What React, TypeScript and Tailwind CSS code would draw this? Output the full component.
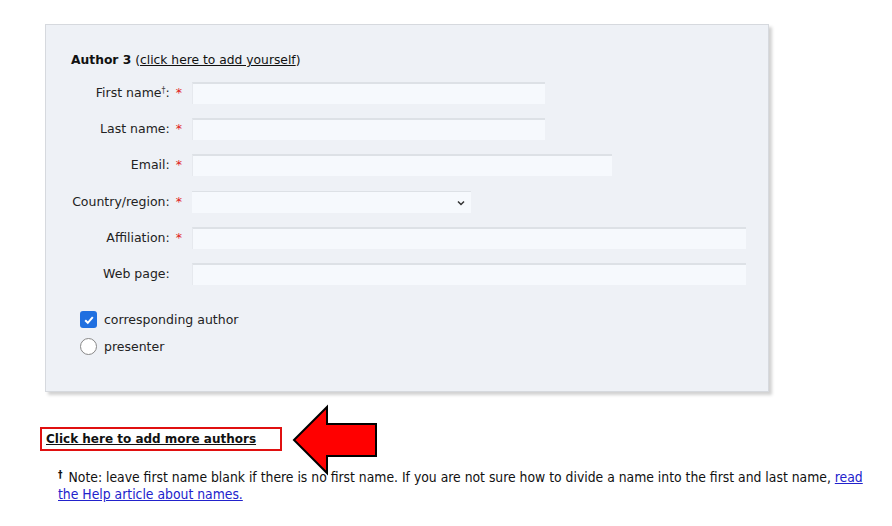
import React from "react";

const Row = ({
  label,
  required,
  sup,
  children,
  className,
}: {
  label: string;
  required?: boolean;
  sup?: boolean;
  children: React.ReactNode;
  className?: string;
}) => (
  <div className={"flex items-center " + (className ?? "")}>
    <div className="w-[146px] shrink-0 pr-[10px] text-right text-[12.5px] text-[#222]">
      {label}
      {sup && <sup className="text-[8px] text-[#444]">†</sup>}:
      <span className={"ml-[6px] text-[#e02020] " + (required ? "" : "invisible")}>*</span>
    </div>
    {children}
  </div>
);

const Field = ({ w }: { w: string }) => (
  <input
    className={
      "h-[22px] bg-[#f6f9fd] border-t-2 border-t-[#dde1e6] border-l border-l-[#e6e9ee] outline-none " + w
    }
  />
);

export default function App() {
  return (
    <div
      className="relative w-[892px] h-[526px] bg-white overflow-hidden"
      style={{ fontFamily: '"DejaVu Sans", Verdana, sans-serif' }}
    >
      <div className="ml-[45px] mt-[24px] w-[724px] h-[368px] bg-[#eef1f6] border border-[#d6d9de] shadow-[3px_3px_3px_rgba(0,0,0,0.18)] pt-[26px]">
        <div className="pl-[25px] text-[12.3px] text-[#111]">
          <span className="font-bold">Author 3</span> (
          <span className="underline">click here to add yourself</span>)
        </div>
        <div className="mt-[13px] flex flex-col">
          <Row label="First name" sup required>
            <Field w="w-[353px]" />
          </Row>
          <Row label="Last name" required className="mt-[14px]">
            <Field w="w-[353px]" />
          </Row>
          <Row label="Email" required className="mt-[14px]">
            <Field w="w-[420px]" />
          </Row>
          <Row label="Country/region" required className="mt-[15px]">
            <div className="h-[22px] w-[279px] bg-[#f6f9fd] border-t border-t-[#dde1e6] flex items-center justify-end pr-[5px]">
              <svg width="10" height="10" viewBox="0 0 10 10">
                <path d="M2 3.5 L5 6.5 L8 3.5" fill="none" stroke="#333" strokeWidth="1.5" />
              </svg>
            </div>
          </Row>
          <Row label="Affiliation" required className="mt-[14px]">
            <Field w="w-[554px]" />
          </Row>
          <Row label="Web page" className="mt-[14px]">
            <Field w="w-[554px]" />
          </Row>
        </div>
        <div className="mt-[25px] pl-[34px] flex flex-col gap-[8px] text-[12.5px] leading-[19px] text-[#222]">
          <div className="flex items-center gap-[7px]">
            <div className="w-[17px] h-[17px] rounded-[3px] bg-[#1f6fe0] flex items-center justify-center">
              <svg width="12" height="12" viewBox="0 0 12 12">
                <path d="M2.2 6.2 L4.8 8.8 L9.8 3.2" fill="none" stroke="white" strokeWidth="2" />
              </svg>
            </div>
            <span>corresponding author</span>
          </div>
          <div className="flex items-center gap-[7px]">
            <div className="w-[17px] h-[17px] rounded-full bg-white border border-[#888]" />
            <span>presenter</span>
          </div>
        </div>
      </div>

      <div className="ml-[40px] mt-[35px] w-[242px] h-[24px] border-2 border-[#e01010] pl-[4px] flex items-center">
        <span className="text-[12px] font-bold underline text-[#111]">Click here to add more authors</span>
      </div>

      <div
        className="ml-[58px] mt-[18px] w-[806px] text-[13.8px] leading-[17px] text-[#111]"
        style={{ fontFamily: '"DejaVu Sans Condensed", "Liberation Sans Narrow", "Liberation Sans", sans-serif' }}
      >
        <span className="relative top-[-4px] mr-[6px] font-bold text-[10px] leading-[10px]">†</span>Note: leave first
        name blank if there is no first name. If you are not sure how to divide a name into the first and last name,{" "}
        <span className="underline text-[#2222cc]">read the Help article about names.</span>
      </div>

      <svg className="absolute left-[290px] top-[403px]" width="92" height="74" viewBox="0 0 92 74">
        <polygon
          points="4,37 37,4 37,21 86,21 86,53 37,53 37,70"
          fill="#ff0000"
          stroke="#000"
          strokeWidth="2"
          strokeLinejoin="miter"
        />
      </svg>
    </div>
  );
}
